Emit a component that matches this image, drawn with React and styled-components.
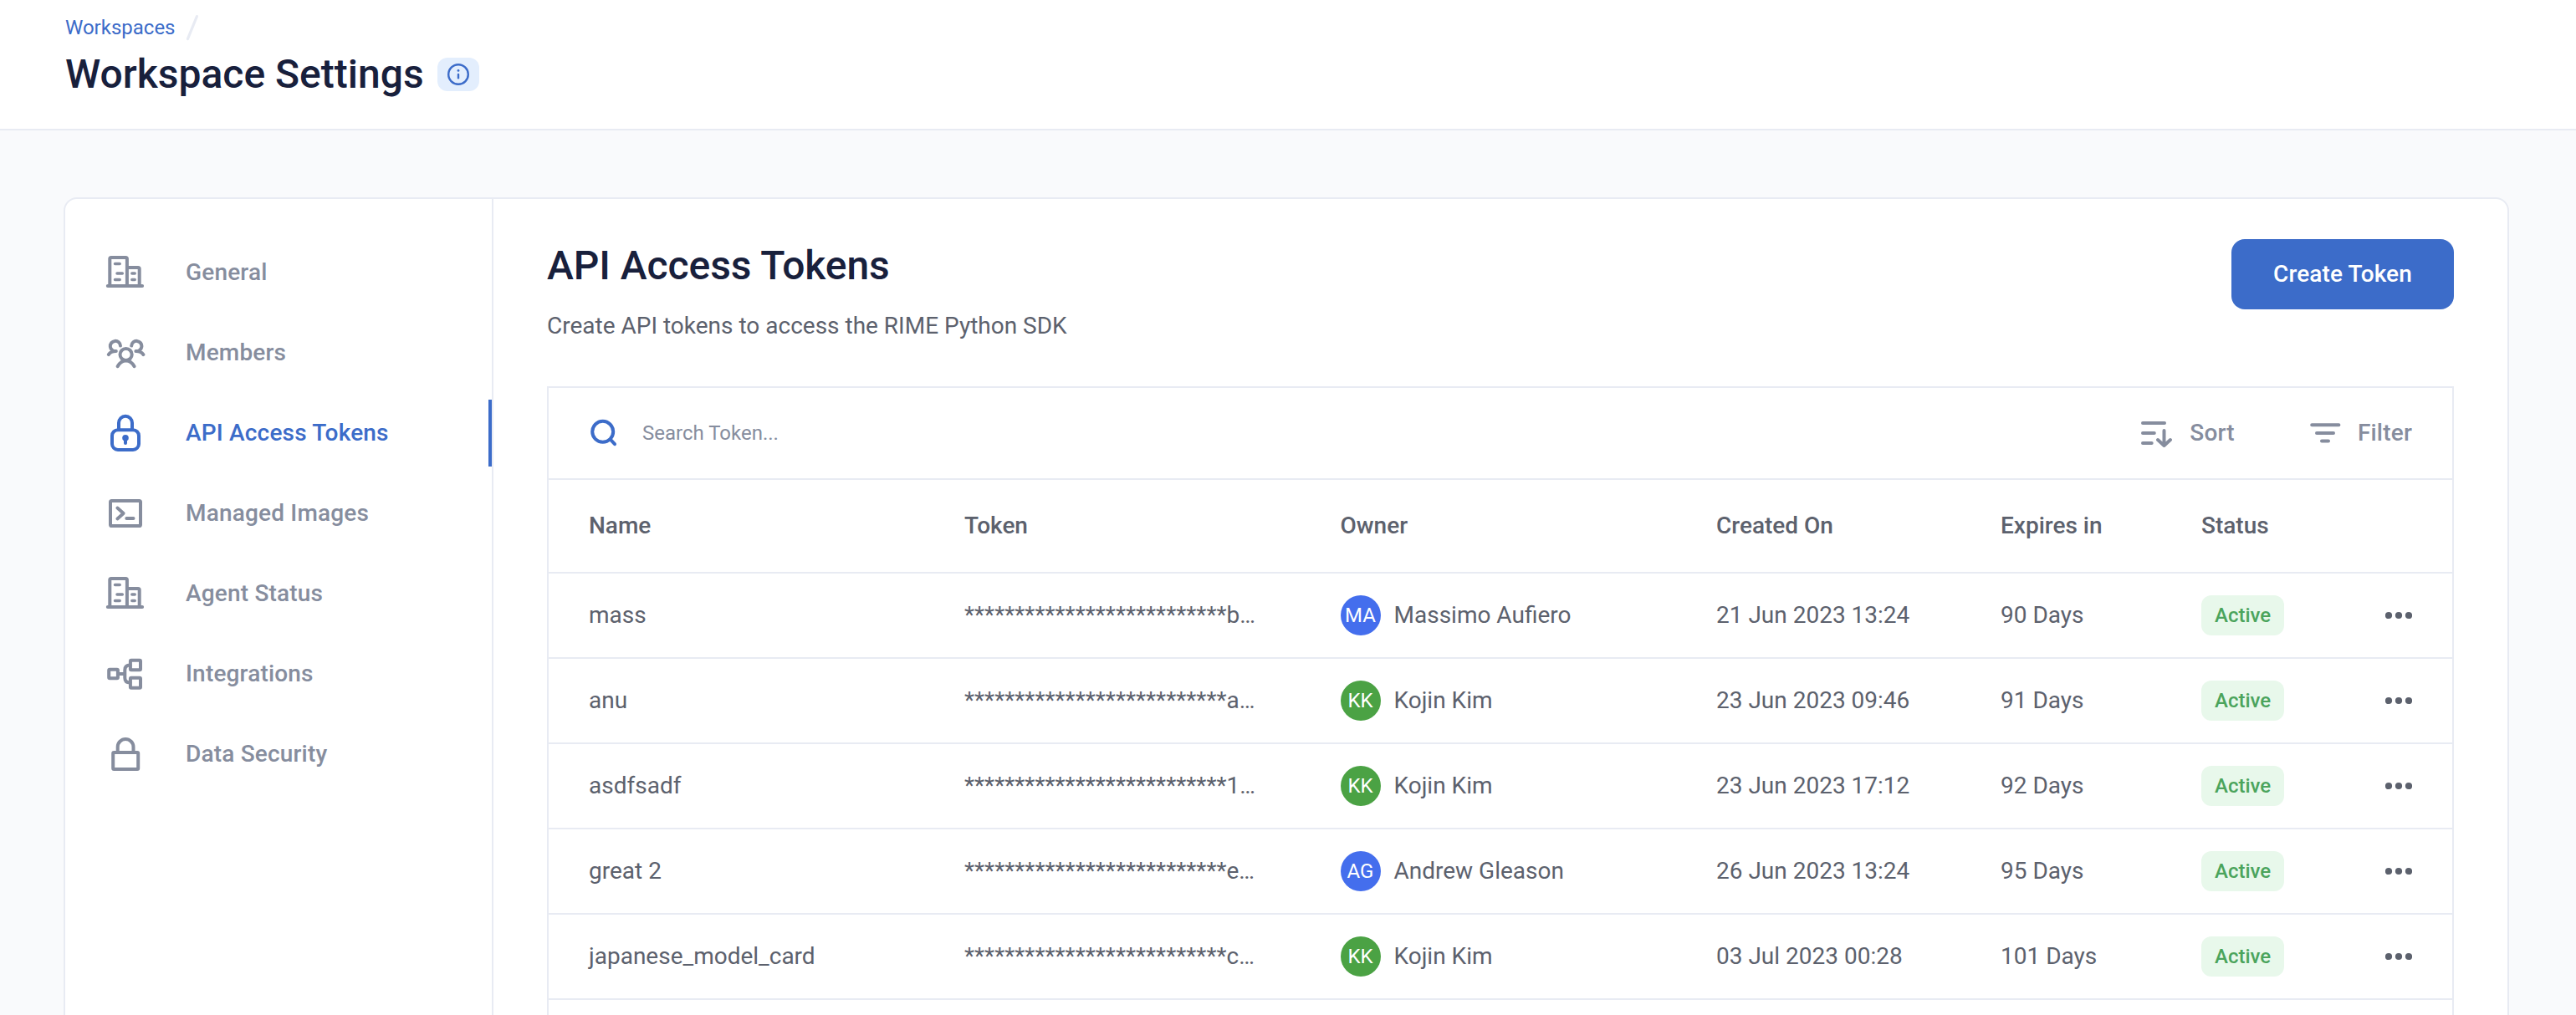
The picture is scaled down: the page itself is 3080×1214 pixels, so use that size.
import React from "react";
import styled, { createGlobalStyle } from "styled-components";

const c = {
  ink: "#18203c",
  text: "#5c616d",
  muted: "#868d9e",
  blue: "#3c6cc9",
  line: "#e8ebf3",
  page: "#f9fafc",
};

const GlobalStyle = createGlobalStyle`
  *, *::before, *::after { box-sizing: border-box; }
  html, body { margin: 0; padding: 0; }
  body {
    font-family: Roboto, "Liberation Sans", sans-serif;
    background: ${c.page};
    color: ${c.text};
    font-size: 28px;
    line-height: 32px;
    overflow: hidden;
  }
  h1, h2, p { margin: 0; }
`;

const Page = styled.div`
  display: flex;
  flex-direction: column;
  height: 1214px;
  overflow: hidden;
`;

const Header = styled.header`
  flex: none;
  height: 156px;
  padding: 15px 78px 0;
  background: #fff;
  border-bottom: 2px solid ${c.line};
`;

const Breadcrumb = styled.nav`
  display: flex;
  align-items: center;
  gap: 12px;
  height: 36px;
  font-size: 24px;
  line-height: 36px;
  color: ${c.blue};
`;

const TitleRow = styled.div`
  display: flex;
  align-items: center;
  gap: 16px;
  height: 76px;
`;

const PageTitle = styled.h1`
  font-size: 48px;
  font-weight: 500;
  line-height: 76px;
  color: ${c.ink};
`;

const InfoButton = styled.button`
  display: flex;
  align-items: center;
  justify-content: center;
  width: 50px;
  height: 40px;
  padding: 0;
  border: 0;
  border-radius: 12px;
  background: #e3eefd;
  color: ${c.blue};
`;

const Card = styled.div`
  display: flex;
  flex: none;
  height: 1100px;
  margin: 80px 80px 0 76px;
  background: #fff;
  border: 2px solid ${c.line};
  border-radius: 16px;
`;

const Sidebar = styled.aside`
  display: flex;
  flex-direction: column;
  gap: 16px;
  flex: none;
  width: 512px;
  padding-top: 48px;
  border-right: 2px solid ${c.line};
`;

const NavItem = styled.a`
  display: flex;
  align-items: center;
  gap: 48px;
  height: 80px;
  padding-left: 48px;
  font-weight: 500;
  letter-spacing: 0.18px;
  color: ${(p) => (p.$active ? c.blue : c.muted)};
  border-right: 4px solid ${(p) => (p.$active ? c.blue : "transparent")};
`;

const Main = styled.main`
  flex: 1;
  min-width: 0;
  padding: 48px 64px 0;
`;

const SectionHead = styled.div`
  display: flex;
  justify-content: space-between;
  align-items: flex-start;
  height: 176px;
`;

const SectionTitle = styled.h2`
  font-size: 48px;
  font-weight: 500;
  line-height: 64px;
  letter-spacing: -0.06px;
  color: ${c.ink};
`;

const SectionText = styled.p`
  margin-top: 19px;
  line-height: 42px;
`;

const PrimaryButton = styled.button`
  width: 266px;
  height: 84px;
  padding: 0;
  border: 0;
  border-radius: 16px;
  background: ${c.blue};
  color: #fff;
  font: 500 28px/32px Roboto, "Liberation Sans", sans-serif;
  letter-spacing: 0.1px;
`;

const Table = styled.section`
  height: 900px;
  border: 2px solid ${c.line};
`;

const Toolbar = styled.div`
  display: flex;
  align-items: center;
  height: 110px;
  padding: 0 48px;
  border-bottom: 2px solid ${c.line};
`;

const Search = styled.label`
  display: flex;
  align-items: center;
  gap: 28px;
  flex: 1;
`;

const SearchIconWrap = styled.span`
  color: ${c.blue};
`;

const SearchInput = styled.input`
  width: 600px;
  padding: 0;
  border: 0;
  outline: 0;
  font: 400 24px Roboto, "Liberation Sans", sans-serif;
  &::placeholder {
    color: ${c.muted};
    opacity: 1;
  }
`;

const ToolActions = styled.div`
  display: flex;
  align-items: center;
  gap: 89px;
`;

const ToolButton = styled.div`
  display: flex;
  align-items: center;
  gap: 20px;
  font-weight: 500;
  letter-spacing: 0.2px;
  color: ${c.muted};
`;

const Row = styled.div`
  display: grid;
  grid-template-columns: 449px 449.5px 449.5px 340px 240px 1fr;
  align-items: center;
  height: ${(p) => (p.$head ? 112 : 102)}px;
  padding: 0 48px;
  border-bottom: 2px solid ${c.line};
  font-weight: ${(p) => (p.$head ? 500 : 400)};
`;

const Cell = styled.div`
  display: flex;
  align-items: center;
  gap: 16px;
  white-space: nowrap;
`;

const StatusCell = styled(Cell)`
  justify-content: space-between;
`;

const Avatar = styled.span`
  display: flex;
  align-items: center;
  justify-content: center;
  width: 48px;
  height: 48px;
  border-radius: 50%;
  background: ${(p) => p.$color};
  color: #fff;
  font-size: 24px;
`;

const Badge = styled.span`
  display: flex;
  align-items: center;
  height: 48px;
  padding: 0 16px;
  border-radius: 12px;
  background: #e8f8eb;
  color: #4ba45c;
  font-size: 24px;
  font-weight: 500;
`;

const Svg = styled.svg`
  display: block;
  flex: none;
  fill: none;
  stroke: currentColor;
  stroke-width: ${(p) => p.$stroke || 4};
  stroke-linecap: round;
  stroke-linejoin: round;
`;

const NavIcon = ({ children }) => (
  <Svg width="48" height="48" viewBox="0 0 48 48">{children}</Svg>
);

const BuildingIcon = () => (
  <NavIcon>
    <path d="M2.8 40H44.1M5.3 40V7.6Q5.3 6 6.9 6H24.3Q25.9 6 25.9 7.6V40M25.9 18H39.1Q40.7 18 40.7 19.6V40" />
    <path strokeWidth="3.5" d="M11.5 13.4H17.2M14 25H20.3M11.5 32.4H17.2M31.8 25H35.2M31.8 32.4H35.2" />
  </NavIcon>
);

const memberSide = "M18 15.6A6.1 6.1 0 1 0 12.8 22M12.8 22C8.6 21.9 5.7 23.3 3.8 26.2";

const MembersIcon = () => (
  <NavIcon>
    <circle cx="24.6" cy="26" r="7.1" />
    <path d="M14.6 40.2C17 35.7 20.4 33.4 24.6 33.4S32.2 35.7 34.6 40.2" />
    <path d={memberSide} />
    <path transform="translate(49.2 0) scale(-1 1)" d={memberSide} />
  </NavIcon>
);

const KeyLockIcon = () => (
  <NavIcon>
    <rect x="8" y="20.2" width="32" height="23.8" rx="7" />
    <path d="M16 20V11.7a8 8 0 0 1 16 0V20" />
    <circle cx="24" cy="29.8" r="3.8" fill="currentColor" stroke="none" />
    <path d="M24 30V36" />
  </NavIcon>
);

const TerminalIcon = () => (
  <NavIcon>
    <rect x="6" y="9" width="36" height="30" rx="1.6" />
    <path d="M14.4 17.6L21.6 24L14.4 30.4M25.3 30H33.5" />
  </NavIcon>
);

const FlowIcon = () => (
  <NavIcon>
    <rect x="4.2" y="18.8" width="10.7" height="10.4" rx="1" />
    <rect x="29.9" y="7.7" width="12.1" height="11.6" rx="1" />
    <rect x="29.9" y="28.7" width="12.1" height="12" rx="1" />
    <path d="M15 24H23M29.5 13.6Q23.3 13.6 23.3 19.4V28.8Q23.3 34.6 29.5 34.6" />
  </NavIcon>
);

const LockIcon = () => (
  <NavIcon>
    <rect x="9.2" y="22" width="30" height="20" rx="1" />
    <path d="M14.7 22V15.4a9.4 9.4 0 0 1 18.8 0V22" />
  </NavIcon>
);

const InfoIcon = () => (
  <Svg width="26" height="26" viewBox="0 0 26 26" $stroke={2.4}>
    <circle cx="13" cy="13" r="11.8" />
    <path d="M13 13V17.2" />
    <circle cx="13" cy="8.4" r="1.4" fill="currentColor" stroke="none" />
  </Svg>
);

const SlashIcon = () => (
  <Svg width="16" height="32" viewBox="0 0 16 32" $stroke={3.2}>
    <path stroke={c.line} d="M2.4 29.6L13.4 2.6" />
  </Svg>
);

const SearchIcon = () => (
  <Svg width="36" height="36" viewBox="0 0 36 36">
    <circle cx="16.7" cy="16.3" r="12.5" />
    <path d="M25.6 25.4L31 31.2" />
  </Svg>
);

const SortIcon = () => (
  <Svg width="38" height="34" viewBox="0 0 38 34">
    <path d="M2 5H28M2 17H15.8M2 29H12.7M27.5 14V32M20 25L27.5 32L35 25" />
  </Svg>
);

const FilterIcon = () => (
  <Svg width="38" height="34" viewBox="0 0 38 34">
    <path d="M3.2 7.3H35.4M9 17H29M15 26.6H23" />
  </Svg>
);

const DotsIcon = () => (
  <Svg width="32" height="10" viewBox="0 0 32 10">
    <g fill="currentColor" stroke="none">
      <circle cx="4" cy="5" r="4.1" />
      <circle cx="16" cy="5" r="4.1" />
      <circle cx="28" cy="5" r="4.1" />
    </g>
  </Svg>
);

const nav = [
  ["General", BuildingIcon],
  ["Members", MembersIcon],
  ["API Access Tokens", KeyLockIcon],
  ["Managed Images", TerminalIcon],
  ["Agent Status", BuildingIcon],
  ["Integrations", FlowIcon],
  ["Data Security", LockIcon],
];

const blueAvatar = "#446eed";
const greenAvatar = "#4ba244";

const tokens = [
  ["mass", "b", "MA", "Massimo Aufiero", blueAvatar, "21 Jun 2023 13:24", "90 Days"],
  ["anu", "a", "KK", "Kojin Kim", greenAvatar, "23 Jun 2023 09:46", "91 Days"],
  ["asdfsadf", "1", "KK", "Kojin Kim", greenAvatar, "23 Jun 2023 17:12", "92 Days"],
  ["great 2", "e", "AG", "Andrew Gleason", blueAvatar, "26 Jun 2023 13:24", "95 Days"],
  ["japanese_model_card", "c", "KK", "Kojin Kim", greenAvatar, "03 Jul 2023 00:28", "101 Days"],
];

export default function App() {
  return (
    <Page>
      <GlobalStyle />
      <Header>
        <Breadcrumb>
          <span>Workspaces</span>
          <SlashIcon />
        </Breadcrumb>
        <TitleRow>
          <PageTitle>Workspace Settings</PageTitle>
          <InfoButton aria-label="Info"><InfoIcon /></InfoButton>
        </TitleRow>
      </Header>
      <Card>
        <Sidebar>
          {nav.map(([label, Icon]) => (
            <NavItem key={label} $active={label === "API Access Tokens"}>
              <Icon />
              <span>{label}</span>
            </NavItem>
          ))}
        </Sidebar>
        <Main>
          <SectionHead>
            <div>
              <SectionTitle>API Access Tokens</SectionTitle>
              <SectionText>Create API tokens to access the RIME Python SDK</SectionText>
            </div>
            <PrimaryButton>Create Token</PrimaryButton>
          </SectionHead>
          <Table>
            <Toolbar>
              <Search>
                <SearchIconWrap><SearchIcon /></SearchIconWrap>
                <SearchInput placeholder="Search Token..." />
              </Search>
              <ToolActions>
                <ToolButton><SortIcon />Sort</ToolButton>
                <ToolButton><FilterIcon />Filter</ToolButton>
              </ToolActions>
            </Toolbar>
            <Row $head>
              <Cell>Name</Cell>
              <Cell>Token</Cell>
              <Cell>Owner</Cell>
              <Cell>Created On</Cell>
              <Cell>Expires in</Cell>
              <Cell>Status</Cell>
            </Row>
            {tokens.map(([name, tail, initials, owner, color, created, expires]) => (
              <Row key={name}>
                <Cell>{name}</Cell>
                <Cell>{"*".repeat(26) + tail + "…"}</Cell>
                <Cell><Avatar $color={color}>{initials}</Avatar>{owner}</Cell>
                <Cell>{created}</Cell>
                <Cell>{expires}</Cell>
                <StatusCell>
                  <Badge>Active</Badge>
                  <DotsIcon />
                </StatusCell>
              </Row>
            ))}
          </Table>
        </Main>
      </Card>
    </Page>
  );
}
